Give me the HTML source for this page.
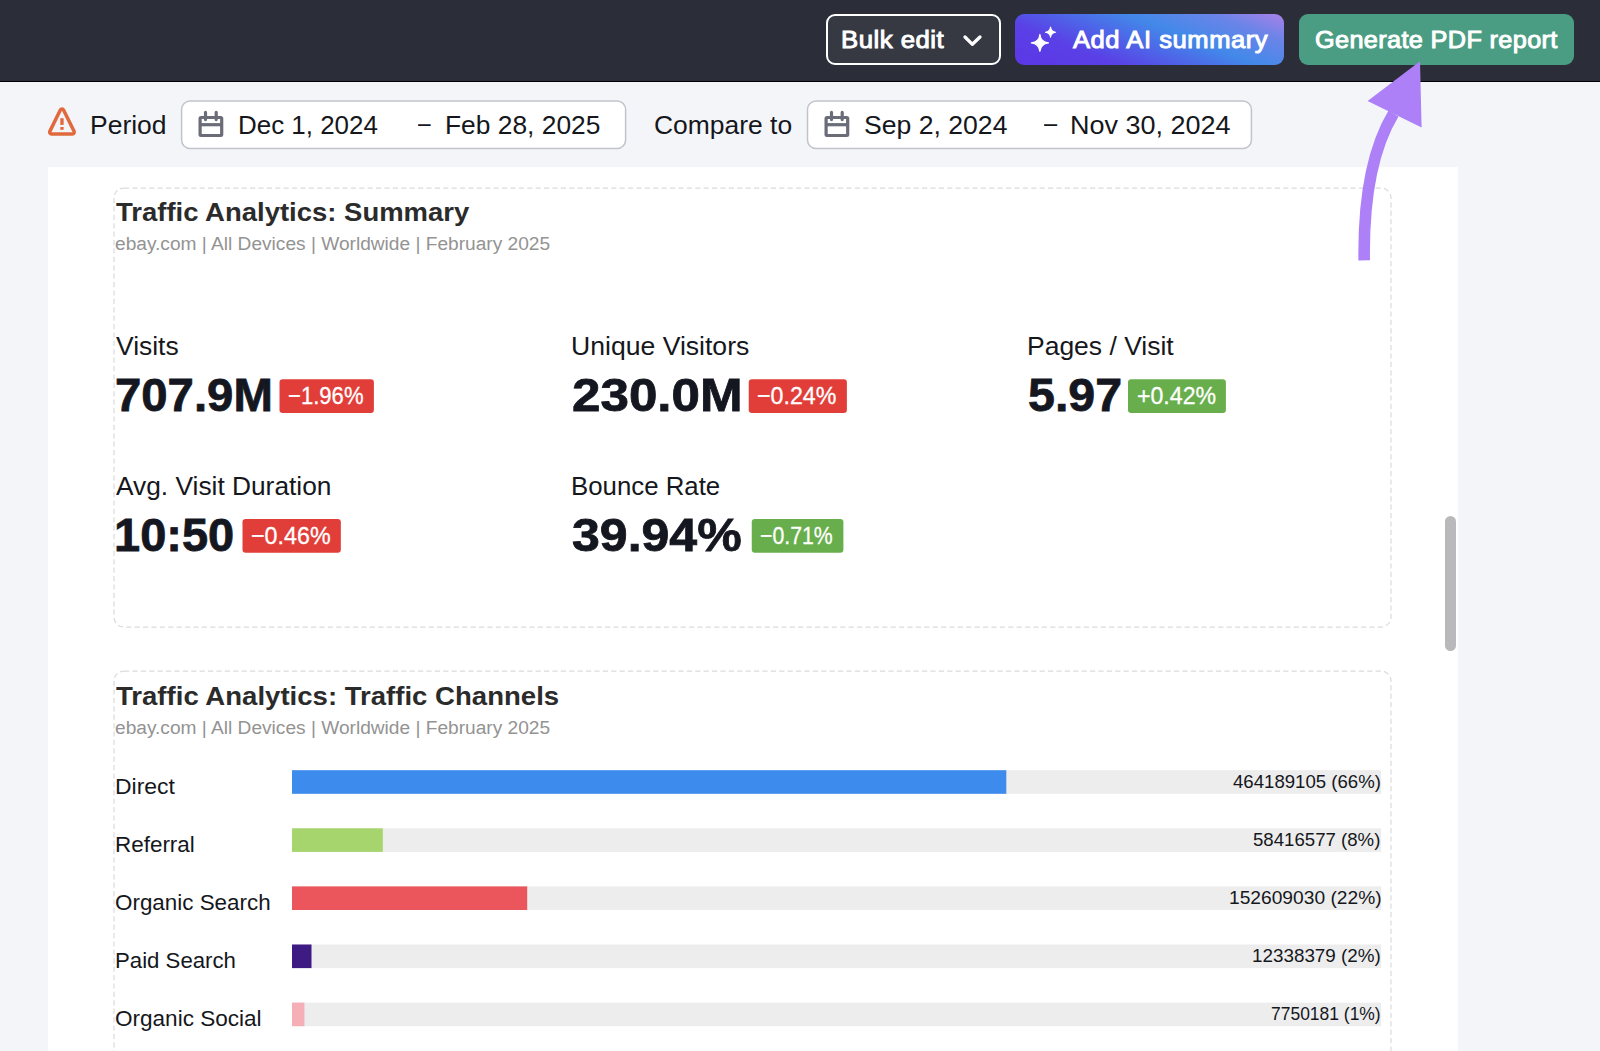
<!DOCTYPE html>
<html lang="en">
<head>
<meta charset="utf-8">
<title>Report builder</title>
<style>
html,body{margin:0;padding:0}
body{width:1600px;height:1051px;overflow:hidden;position:relative;background:#f4f5f9;font-family:"Liberation Sans",Arial,Helvetica,sans-serif}
.t{position:absolute;white-space:nowrap;line-height:1;display:block;transform-origin:0 0}
.ico{position:absolute;display:block;overflow:visible}
.box{position:absolute;margin:0;padding:0}
header{position:absolute;left:0;top:0;width:1600px;height:82px;background:linear-gradient(#2b2e38 0,#2b2e38 80.6px,#000 80.7px,#000 100%)}
button{font:inherit;color:inherit;margin:0;padding:0;border:0;text-align:left;cursor:pointer}
.btn{position:absolute;top:14px;height:51px;box-sizing:border-box;border-radius:9px}
.btn-bulk{left:825.6px;width:175.6px;top:13.6px;height:51.6px;border:2px solid #fff;background:#363842}
.btn-ai{left:1015px;width:269.4px;background:linear-gradient(21.5deg,#5c37e6 0%,#5a40e6 26%,#4289e9 61%,#6a84e8 82%,#a981e8 100%)}
.btn-pdf{left:1298.8px;width:275.4px;background:#4a9d82}
.toolbar{position:absolute;left:0;top:82px;width:1600px;height:85px}
.field{position:absolute;top:15px;width:452px;height:56px}
.panel{position:absolute;left:48px;top:167px;width:1409.7px;height:900px;background:#fff}
.card{position:absolute;left:62px;width:1286px;height:448px}
.metric{position:absolute;width:440px;height:90px}
.row{position:absolute;left:0;width:1286px;height:30px}
.thumb{position:absolute;left:1396.8px;top:349px;width:11.3px;height:135px;border-radius:6px;background:#b9b9bc}
.annot{position:absolute;left:0;top:0;width:0;height:0}
</style>
</head>
<body>
<header>
  <button class="btn btn-bulk" type="button"><span class="t" style="left:13.6px;top:12.4px;font-size:24.2px;font-weight:400;-webkit-text-stroke:0.95px currentColor;letter-spacing:0.46px;transform:scaleX(1.064);color:#fff">Bulk edit</span><svg class="ico" style="left:130.4px;top:14.4px" width="28" height="22" viewBox="958 30 28 22"><path d="M965 37l7.4 7.3L980 37" fill="none" stroke="#fff" stroke-width="3.3" stroke-linecap="round" stroke-linejoin="round"/></svg></button>
  <button class="btn btn-ai" type="button"><svg class="ico" style="left:13.0px;top:10.0px" width="32" height="32" viewBox="1028 24 32 32"><g fill="#fff" stroke="#fff" stroke-width="1.1" stroke-linejoin="round"><path d="M1039.90 34.20Q1040.77 41.98 1048.55 42.85Q1040.77 43.72 1039.90 51.50Q1039.04 43.72 1031.25 42.85Q1039.04 41.98 1039.90 34.20z"/><path d="M1050.55 27.10Q1051.06 31.69 1055.65 32.20Q1051.06 32.71 1050.55 37.30Q1050.04 32.71 1045.45 32.20Q1050.04 31.69 1050.55 27.10z"/></g></svg><span class="t" style="left:58.1px;top:13.9px;font-size:24.2px;font-weight:400;-webkit-text-stroke:0.95px currentColor;letter-spacing:0.50px;transform:scaleX(1.058);color:#fff">Add AI summary</span></button>
  <button class="btn btn-pdf" type="button"><span class="t" style="left:16.2px;top:13.9px;font-size:24.2px;font-weight:400;-webkit-text-stroke:0.95px currentColor;letter-spacing:0.35px;transform:scaleX(1.044);color:#fff">Generate PDF report</span></button>
</header>

<section class="toolbar">
  <svg class="ico" style="left:44.0px;top:22.0px" width="36" height="36" viewBox="44 104 36 36"><path d="M63.56 110.07L74.07 131.35A1.8 1.8 0 0 1 72.45 133.95L51.45 133.95A1.8 1.8 0 0 1 49.83 131.35L60.34 110.07A1.8 1.8 0 0 1 63.56 110.07z" fill="none" stroke="#e0693d" stroke-width="3.5"/><rect x="60.3" y="118.2" width="3.35" height="6.7" fill="#e0693d"/><rect x="60.3" y="127" width="3.35" height="2.8" fill="#e0693d"/></svg>
  <span class="t" style="left:89.8px;top:30.6px;font-size:25.2px;transform:scaleX(1.051);color:#15171c">Period</span>
  <div class="field" style="left:178px"><svg class="ico" style="left:0.0px;top:0.0px" width="452" height="56" viewBox="178 97 452 56"><rect x="181.6" y="101" width="444.0" height="47.4" rx="8.5" fill="#fff" stroke="#c1c3cd" stroke-width="1.5"/></svg><svg class="ico" style="left:20.0px;top:12.0px" width="28" height="30" viewBox="0 0 28 30"><g fill="none" stroke="#6a6c78" stroke-width="3.2" stroke-linecap="round" stroke-linejoin="round"><rect x="2.1" y="8.5" width="21.6" height="18" rx="0.9"/><path d="M7.5 3.4v7.2M18.2 3.4v7.2"/><path d="M2.5 15.7h21" stroke-linecap="butt"/></g></svg><span class="t" style="left:60.3px;top:15.6px;font-size:25.2px;transform:scaleX(1.030);color:#15171c">Dec 1, 2024</span><span class="t" style="left:239.9px;top:14.3px;font-size:25.2px;transform:scaleX(0.898);color:#15171c">–</span><span class="t" style="left:266.9px;top:15.6px;font-size:25.2px;transform:scaleX(1.047);color:#15171c">Feb 28, 2025</span></div>
  <span class="t" style="left:654.2px;top:30.6px;font-size:25.2px;transform:scaleX(1.050);color:#15171c">Compare to</span>
  <div class="field" style="left:804px"><svg class="ico" style="left:0.0px;top:0.0px" width="452" height="56" viewBox="804 97 452 56"><rect x="807.5" y="101" width="443.9" height="47.4" rx="8.5" fill="#fff" stroke="#c1c3cd" stroke-width="1.5"/></svg><svg class="ico" style="left:19.8px;top:12.0px" width="28" height="30" viewBox="0 0 28 30"><g fill="none" stroke="#6a6c78" stroke-width="3.2" stroke-linecap="round" stroke-linejoin="round"><rect x="2.1" y="8.5" width="21.6" height="18" rx="0.9"/><path d="M7.5 3.4v7.2M18.2 3.4v7.2"/><path d="M2.5 15.7h21" stroke-linecap="butt"/></g></svg><span class="t" style="left:60.2px;top:15.6px;font-size:25.2px;transform:scaleX(1.056);color:#15171c">Sep 2, 2024</span><span class="t" style="left:239.6px;top:14.3px;font-size:25.2px;transform:scaleX(0.937);color:#15171c">–</span><span class="t" style="left:266.0px;top:15.6px;font-size:25.2px;transform:scaleX(1.071);color:#15171c">Nov 30, 2024</span></div>
</section>

<main class="panel">
<article class="card" style="top:17px">
  <svg class="ico" style="left:0.0px;top:0.0px" width="1286" height="448" viewBox="110 184 1286 448"><rect x="114" y="188" width="1277" height="439" rx="10" fill="none" stroke="#dcdcdc" stroke-width="1.25" stroke-dasharray="5.2 3.2"/></svg>
  <h2 class="box"><span class="t" style="left:5.9px;top:15.3px;font-size:26px;font-weight:700;transform:scaleX(1.057);color:#2b2b2b">Traffic Analytics: Summary</span></h2>
  <p class="box"><span class="t" style="left:5.0px;top:52.0px;font-size:17.6px;transform:scaleX(1.087);color:#939393">ebay.com | All Devices | Worldwide | February 2025</span></p>
  <div class="metric" style="left:4px;top:146px"><span class="t" style="left:1.6px;top:4.0px;font-size:25.4px;transform:scaleX(1.040);color:#15171c">Visits</span><span class="t" style="left:1.4px;top:42.2px;font-size:46.8px;font-weight:700;-webkit-text-stroke:0.8px currentColor;transform:scaleX(1.011);color:#14171f">707.9M</span><svg class="ico" style="left:164.0px;top:48.0px" width="98" height="37" viewBox="278 378 98 37"><rect x="279.50" y="379.20" width="94.40" height="33.80" rx="3.2" fill="#e23e39"/></svg><span class="t" style="left:174.1px;top:54.0px;font-size:24.2px;transform:scaleX(0.913);-webkit-text-stroke:0.3px #fff;color:#fff">−1.96%</span></div>
  <div class="metric" style="left:460px;top:146px"><span class="t" style="left:0.6px;top:4.0px;font-size:25.4px;transform:scaleX(1.047);color:#15171c">Unique Visitors</span><span class="t" style="left:1.6px;top:42.2px;font-size:46.8px;font-weight:700;-webkit-text-stroke:0.8px currentColor;transform:scaleX(1.093);color:#14171f">230.0M</span><svg class="ico" style="left:177.0px;top:48.0px" width="102" height="37" viewBox="747 378 102 37"><rect x="748.75" y="379.20" width="98.15" height="33.80" rx="3.2" fill="#e23e39"/></svg><span class="t" style="left:187.3px;top:54.0px;font-size:24.2px;transform:scaleX(0.959);-webkit-text-stroke:0.3px #fff;color:#fff">−0.24%</span></div>
  <div class="metric" style="left:916px;top:146px"><span class="t" style="left:1.3px;top:4.0px;font-size:25.4px;transform:scaleX(1.043);color:#15171c">Pages / Visit</span><span class="t" style="left:1.5px;top:42.2px;font-size:46.8px;font-weight:700;-webkit-text-stroke:0.8px currentColor;transform:scaleX(1.033);color:#14171f">5.97</span><svg class="ico" style="left:101.0px;top:48.0px" width="101" height="37" viewBox="1127 378 101 37"><rect x="1128.00" y="379.20" width="97.90" height="33.80" rx="3.2" fill="#68ae4c"/></svg><span class="t" style="left:110.6px;top:54.0px;font-size:24.2px;transform:scaleX(0.956);-webkit-text-stroke:0.3px #fff;color:#fff">+0.42%</span></div>
  <div class="metric" style="left:4px;top:286px"><span class="t" style="left:1.6px;top:4.0px;font-size:25.4px;transform:scaleX(1.036);color:#15171c">Avg. Visit Duration</span><span class="t" style="left:0.4px;top:42.2px;font-size:46.8px;font-weight:700;-webkit-text-stroke:0.8px currentColor;transform:scaleX(1.004);color:#14171f">10:50</span><svg class="ico" style="left:127.0px;top:48.0px" width="102" height="37" viewBox="241 518 102 37"><rect x="242.50" y="519.00" width="98.35" height="33.80" rx="3.2" fill="#e23e39"/></svg><span class="t" style="left:137.1px;top:53.8px;font-size:24.2px;transform:scaleX(0.962);-webkit-text-stroke:0.3px #fff;color:#fff">−0.46%</span></div>
  <div class="metric" style="left:460px;top:286px"><span class="t" style="left:0.7px;top:4.0px;font-size:25.4px;transform:scaleX(1.016);color:#15171c">Bounce Rate</span><span class="t" style="left:2.2px;top:42.2px;font-size:46.8px;font-weight:700;-webkit-text-stroke:0.8px currentColor;transform:scaleX(1.069);color:#14171f">39.94%</span><svg class="ico" style="left:180.0px;top:48.0px" width="95" height="37" viewBox="750 518 95 37"><rect x="751.75" y="519.00" width="91.65" height="33.80" rx="3.2" fill="#68ae4c"/></svg><span class="t" style="left:190.4px;top:53.8px;font-size:24.2px;transform:scaleX(0.879);-webkit-text-stroke:0.3px #fff;color:#fff">−0.71%</span></div>
</article>
<article class="card" style="top:500px">
  <svg class="ico" style="left:0.0px;top:0.0px" width="1286" height="448" viewBox="110 667 1286 448"><rect x="114" y="671" width="1277" height="439" rx="10" fill="none" stroke="#dcdcdc" stroke-width="1.25" stroke-dasharray="5.2 3.2"/></svg>
  <h2 class="box"><span class="t" style="left:6.1px;top:15.9px;font-size:26px;font-weight:700;transform:scaleX(1.060);color:#2b2b2b">Traffic Analytics: Traffic Channels</span></h2>
  <p class="box"><span class="t" style="left:5.0px;top:52.9px;font-size:17.6px;transform:scaleX(1.087);color:#939393">ebay.com | All Devices | Worldwide | February 2025</span></p>
  <div class="row" style="top:100px"><span class="t" style="left:4.5px;top:8.8px;font-size:21.2px;transform:scaleX(1.083);color:#15171c">Direct</span><svg class="ico" style="left:180.0px;top:0.0px" width="1094" height="30" viewBox="290 767 1094 30"><rect x="292.0" y="770.2" width="1089.1" height="23.6" fill="#ededed"/><rect x="292.0" y="770.2" width="714.3" height="23.6" fill="#3e8bee"/></svg><span class="t" style="left:1123.0px;top:7.0px;font-size:17.7px;transform:scaleX(1.052);color:#15171c">464189105 (66%)</span></div>
  <div class="row" style="top:158px"><span class="t" style="left:4.6px;top:8.9px;font-size:21.2px;transform:scaleX(1.059);color:#15171c">Referral</span><svg class="ico" style="left:180.0px;top:0.0px" width="1094" height="30" viewBox="290 825 1094 30"><rect x="292.0" y="828.3" width="1089.1" height="23.6" fill="#ededed"/><rect x="292.0" y="828.3" width="90.8" height="23.6" fill="#a6d46d"/></svg><span class="t" style="left:1143.4px;top:7.1px;font-size:17.7px;transform:scaleX(1.053);color:#15171c">58416577 (8%)</span></div>
  <div class="row" style="top:216px"><span class="t" style="left:5.2px;top:9.0px;font-size:21.2px;transform:scaleX(1.057);color:#15171c">Organic Search</span><svg class="ico" style="left:180.0px;top:0.0px" width="1094" height="30" viewBox="290 883 1094 30"><rect x="292.0" y="886.4" width="1089.1" height="23.6" fill="#ededed"/><rect x="292.0" y="886.4" width="235.2" height="23.6" fill="#ea565b"/></svg><span class="t" style="left:1118.5px;top:7.2px;font-size:17.7px;transform:scaleX(1.085);color:#15171c">152609030 (22%)</span></div>
  <div class="row" style="top:274px"><span class="t" style="left:4.6px;top:9.1px;font-size:21.2px;transform:scaleX(1.048);color:#15171c">Paid Search</span><svg class="ico" style="left:180.0px;top:0.0px" width="1094" height="30" viewBox="290 941 1094 30"><rect x="292.0" y="944.5" width="1089.1" height="23.6" fill="#ededed"/><rect x="292.0" y="944.5" width="19.5" height="23.6" fill="#3e1b82"/></svg><span class="t" style="left:1142.0px;top:7.3px;font-size:17.7px;transform:scaleX(1.065);color:#15171c">12338379 (2%)</span></div>
  <div class="row" style="top:332px"><span class="t" style="left:5.2px;top:9.2px;font-size:21.2px;transform:scaleX(1.064);color:#15171c">Organic Social</span><svg class="ico" style="left:180.0px;top:0.0px" width="1094" height="30" viewBox="290 999 1094 30"><rect x="292.0" y="1002.6" width="1089.1" height="23.6" fill="#ededed"/><rect x="292.0" y="1002.6" width="12.4" height="23.6" fill="#f5afb6"/></svg><span class="t" style="left:1161.2px;top:7.4px;font-size:17.7px;transform:scaleX(0.987);color:#15171c">7750181 (1%)</span></div>
</article>
<div class="thumb"></div>
</main>

<div class="annot"><svg class="ico" style="left:1340.0px;top:50.0px" width="110" height="230" viewBox="1340 50 110 230"><path d="M1364.2 260.3C1363.5 210 1368.7 154.7 1393.5 113.5" fill="none" stroke="#ad80f7" stroke-width="11.6"/><path d="M1420 61.3L1367.6 101L1421.6 127.6z" fill="#ad80f7"/></svg></div>
</body>
</html>
